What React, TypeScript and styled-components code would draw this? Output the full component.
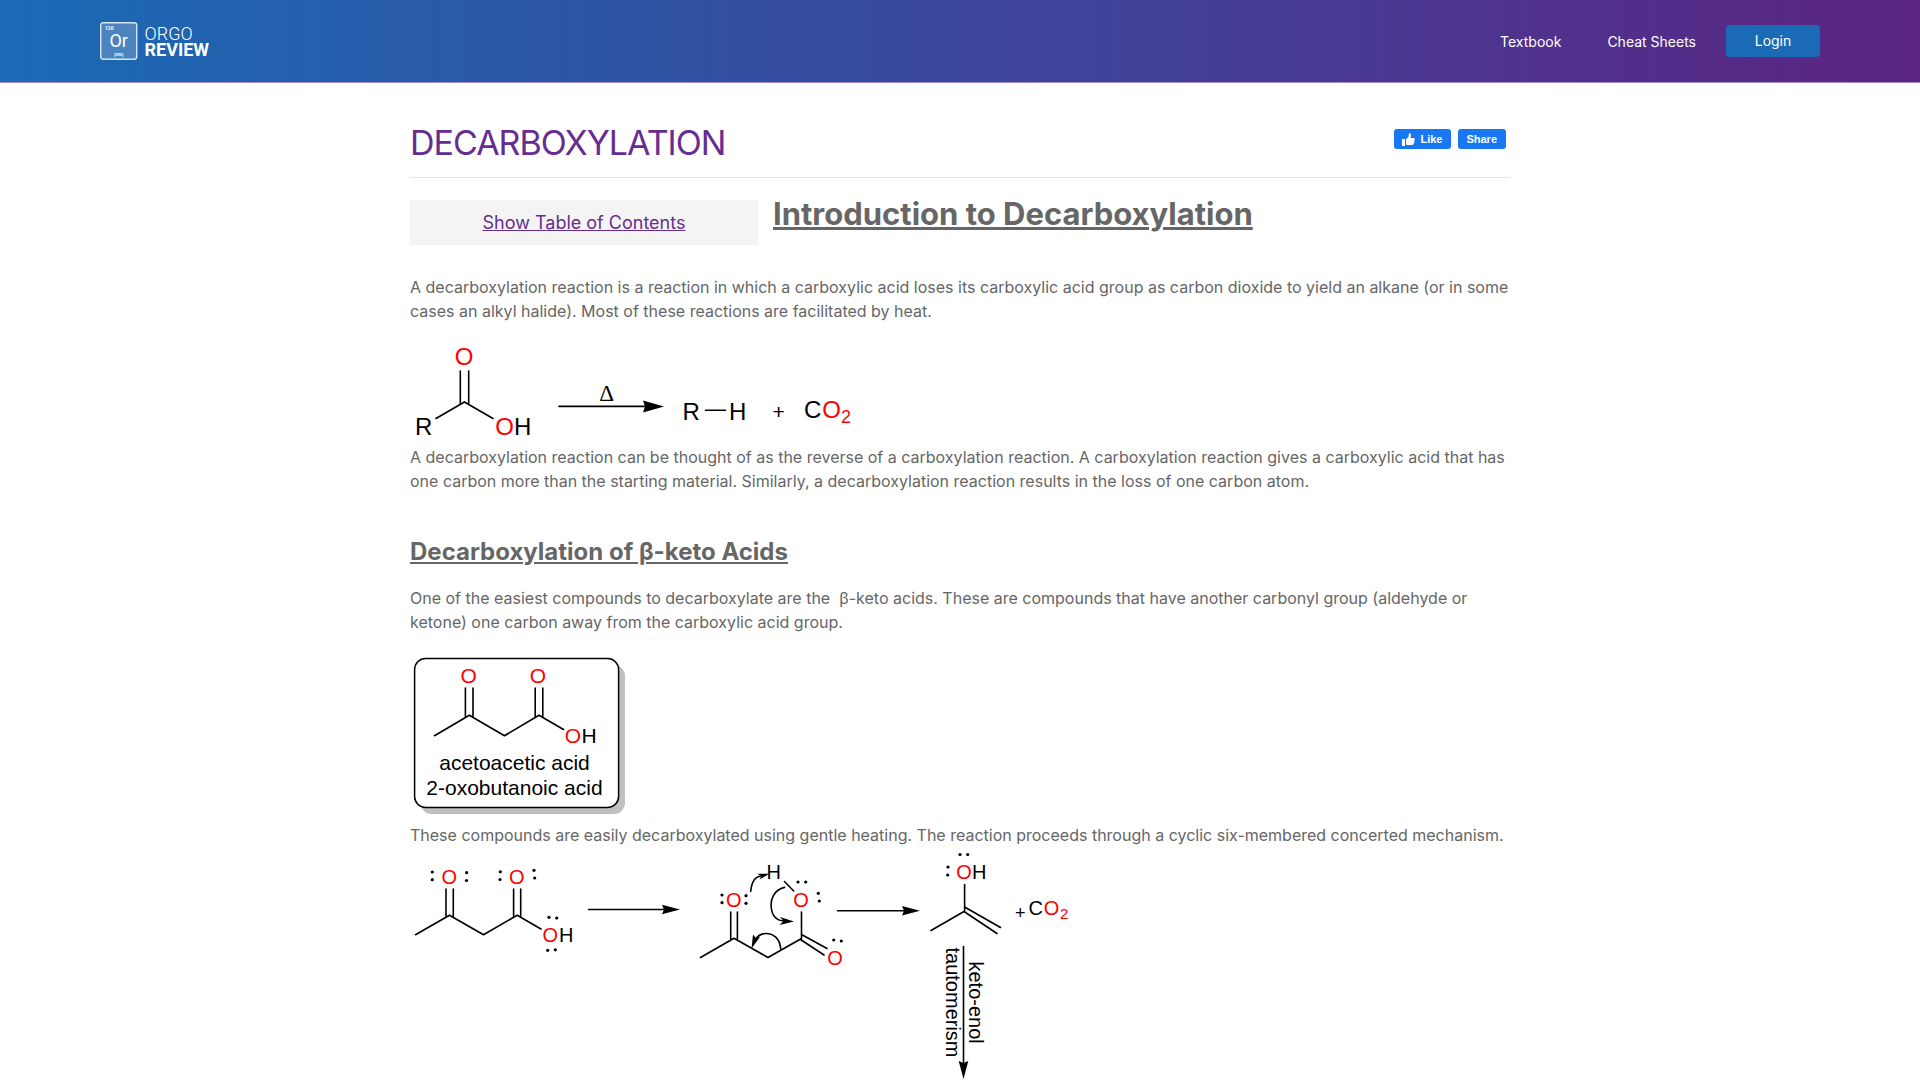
import React from "react";
import styled, { createGlobalStyle } from "styled-components";

const GlobalStyle = createGlobalStyle`
  * { box-sizing: border-box; }
  body {
    margin: 0;
    background: #fff;
    color: #666;
    font: 400 16px/24px Inter, "Liberation Sans", sans-serif;
  }
`;

const Header = styled.header`
  display: flex;
  align-items: center;
  justify-content: space-between;
  height: 83px;
  padding: 0 100px;
  border-bottom: 1px solid #a78bc4;
  background: linear-gradient(to right, #1a6ab5, #5c2483) padding-box;
`;

const LogoLink = styled.a`
  display: flex;
`;

const Nav = styled.nav`
  display: flex;
  align-items: center;
  font-size: 14px;
`;

const NavLink = styled.a`
  margin-right: 46px;
  padding-top: 2px;
  color: #fff;
  text-decoration: none;
  &:last-of-type { margin-right: 30px; }
`;

const LoginButton = styled.button`
  width: 94px;
  height: 32px;
  padding: 0;
  border: 0;
  border-radius: 4px;
  background: #1a6ab5;
  color: #fff;
  font: inherit;
`;

const Page = styled.main`
  max-width: 1100px;
  margin: 0 auto;
  padding-top: 38px;
`;

const TitleRow = styled.div`
  display: flex;
  justify-content: space-between;
  align-items: flex-start;
  padding: 0 4px 12px 0;
  border-bottom: 1px solid #e5e5e5;
`;

const Title = styled.h1`
  margin: 0;
  color: #662d91;
  font-size: 34px;
  font-weight: 400;
  line-height: 44px;
  letter-spacing: -1px;
  text-transform: uppercase;
`;

const Social = styled.div`
  display: flex;
  gap: 7px;
  padding-top: 8px;
`;

const SocialButton = styled.button`
  display: flex;
  align-items: center;
  gap: 5px;
  height: 20px;
  padding: 0 9px 0 8px;
  border: 0;
  border-radius: 3px;
  background: #1877f2;
  color: #fff;
  font: 700 11px/20px "Liberation Sans", Arial, sans-serif;
  letter-spacing: normal;
`;

const IntroRow = styled.div`
  display: flex;
  align-items: flex-start;
  gap: 15px;
  padding-top: 22px;
`;

const Toc = styled.div`
  display: flex;
  justify-content: center;
  width: 348px;
  padding: 11px 0 10px;
  background: #f4f4f4;
`;

const TocLink = styled.a`
  color: #662d91;
  font-size: 18px;
`;

const Heading = styled.h2`
  margin: 0;
  font-size: 31px;
  font-weight: 700;
  line-height: 28px;
  text-decoration: underline;
`;

const SubHeading = styled.h3`
  margin: 43px 0 18px;
  font-size: 24px;
  font-weight: 700;
  line-height: 32px;
  text-decoration: underline;
`;

const Text = styled.p<{ $lead?: boolean }>`
  margin: ${(p) => (p.$lead ? "30px" : "0")} 0 0;
`;

const Figure = styled.svg`
  display: block;
  overflow: visible;
  font-family: "Liberation Sans", Arial, sans-serif;
`;

const Bonds = styled.path`
  fill: none;
  stroke: #000;
  stroke-width: 1.6;
  stroke-linecap: round;
  stroke-linejoin: round;
`;

const RED = "#f00";

type LabelProps = { x: number; y: number; size?: number; children: string };

const O = ({ x, y, size = 20 }: { x: number; y: number; size?: number }) => (
  <text x={x} y={y} fontSize={size} fill={RED} textAnchor="middle">O</text>
);

const Label = ({ x, y, size = 20, children }: LabelProps) => (
  <text x={x} y={y} fontSize={size} fill="#000">{children}</text>
);

const Dots = ({ at }: { at: [number, number][] }) => (
  <g>{at.map(([x, y]) => <circle key={`${x},${y}`} cx={x} cy={y} r={1.6} />)}</g>
);

const Arrow = ({ x1, x2, y, head, half }: { x1: number; x2: number; y: number; head: number; half: number }) => (
  <g>
    <Bonds d={`M${x1} ${y}H${x2 - head + 4}`} />
    <path d={`M${x2} ${y}L${x2 - head} ${y - half}L${x2 - head + 2} ${y}L${x2 - head} ${y + half}Z`} />
  </g>
);

const Logo = () => (
  <svg width="112" height="38" viewBox="0 0 112 38" fill="#fff" fontFamily="Roboto, sans-serif">
    <rect x="0.7" y="0.7" width="36" height="36.6" rx="2.5" fill="#4d84c0" stroke="#d5e3f3" strokeWidth="1.4" />
    <text x="5" y="8" fontSize="5" fontWeight="700">120</text>
    <text x="18.7" y="25" fontSize="18" textAnchor="middle">Or</text>
    <text x="18.7" y="34" fontSize="4" fontWeight="700" textAnchor="middle">[295]</text>
    <text x="44.5" y="18" fontSize="18" fontWeight="300">ORGO</text>
    <text x="44.5" y="34" fontSize="18" fontWeight="700">REVIEW</text>
  </svg>
);

const ThumbIcon = () => (
  <svg width="13" height="13" viewBox="0 0 13 13" fill="#fff" aria-hidden="true">
    <path d="M0 6h3v7H0zM4 6.2C5.4 5.4 6.6 3.8 6.8 2.2V.8C7 0 8.9-.2 9 2.2c0 1-.3 1.900-.6 2.700h3.400c1.300.2 1.300 1.700.5 2.100.6.6.4 1.500-.2 1.800.4.7.1 1.400-.5 1.700.2 1-.4 1.500-1.200 1.500H6.200C5.300 12 4.800 11.500 4 11.400z" />
  </svg>
);

const ReactionFigure = () => (
  <Figure width="460" height="122" viewBox="410 323 460 122" role="img" aria-label="Decarboxylation reaction">
    <O x={464} y={365} size={24} />
    <Bonds d="M460.3 371V403.5M468.7 371V403.5M436 418.5L464.4 402L493 418.5" />
    <Label x={415} y={434.5} size={24}>R</Label>
    <O x={504.5} y={434.5} size={24} />
    <Label x={514} y={434.5} size={24}>H</Label>
    <Arrow x1={559} x2={664} y={406.4} head={21} half={6} />
    <text x="606.7" y="400.5" fontSize="23" fontFamily="'Liberation Serif', serif" textAnchor="middle">Δ</text>
    <Label x={682.5} y={419.5} size={24}>R</Label>
    <Bonds d="M705.5 410.3H725.5" />
    <Label x={729} y={419.5} size={24}>H</Label>
    <Label x={772.5} y={418.5} size={21}>+</Label>
    <Label x={804} y={418} size={24}>C</Label>
    <O x={831.5} y={418} size={24} />
    <text x="841" y="422.5" fontSize="18" fill={RED}>2</text>
  </Figure>
);

const AcidFigure = () => (
  <Figure width="220" height="189" viewBox="410 634 220 189" role="img" aria-label="Acetoacetic acid">
    <rect x="420.5" y="665" width="204.5" height="149" rx="11" fill="#c0c0c0" />
    <rect x="414.6" y="658.6" width="204" height="148.8" rx="11" fill="#fff" stroke="#000" strokeWidth="1.5" />
    <O x={468.7} y={683} size={21} />
    <O x={538} y={683} size={21} />
    <Bonds d="M465.4 688V716.5M473 688V716.5M535.2 688V716.5M542.8 688V716.5M434.5 735.7L469.3 715.3L504.5 735.7L539 715.3L563.5 729.5" />
    <O x={573} y={743} size={21} />
    <Label x={581.5} y={743} size={21}>H</Label>
    <text x="514.5" y="770" fontSize="21" textAnchor="middle">acetoacetic acid</text>
    <text x="514.5" y="795" fontSize="21" textAnchor="middle">2-oxobutanoic acid</text>
  </Figure>
);

const MechanismFigure = () => (
  <Figure width="670" height="233" viewBox="410 847 670 233" role="img" aria-label="Cyclic decarboxylation mechanism">
    <O x={449.3} y={883.5} />
    <O x={516.7} y={883.5} />
    <Bonds d="M446 889V917M453.3 889V917M513.6 889V917M520.7 889V917M415.5 934.7L449.5 915.2L483.5 934.7L517.2 915.2L541 929" />
    <O x={550.3} y={942} />
    <Label x={559} y={942}>H</Label>
    <Dots at={[[432.3, 872], [432.3, 879.7], [466.7, 872.7], [466.5, 880.5], [500.3, 871.8], [500, 879.5], [534, 870.3], [534.7, 878], [549, 917.3], [556.7, 918], [547.7, 950.3], [555.3, 949.8]]} />
    <Arrow x1={588.5} x2={680} y={909.5} head={18} half={4.8} />

    <O x={733.7} y={907} />
    <O x={801} y={907} />
    <Label x={766.5} y={879}>H</Label>
    <O x={835} y={965.3} />
    <Bonds d="M730.7 912V938.5M737.4 912V938.5M700.5 957.5L734 938.2L768 957.5L801.5 938.5V912M784.5 881.5L793.7 891M801.5 934.5L827 948.5M800.5 939.5L824 955" />
    <Bonds d="M750.7 891.5Q752 877 761 876M784.5 887.4C774 890 770.5 899 771.2 907C772 917 777 920.5 784 921M780.7 948.7C780 938 773 933.5 766 933.5C761 933.5 757.5 936 755 940" />
    <path d="M769.5 873.8L757 873.8L761.5 876L759.5 879.5ZM794 921.6L780 917L783.5 921L779.5 925ZM751.5 948.5L753 934.5L755.8 938L760 937Z" />
    <Dots at={[[722, 895], [722, 902.7], [746, 895.7], [746, 903.3], [798, 882], [805.7, 882], [818.3, 893.3], [819.3, 901], [833.7, 940], [841.3, 941]]} />
    <Arrow x1={837.5} x2={920} y={910.7} head={18} half={4.8} />

    <O x={964} y={879} />
    <Label x={972} y={879}>H</Label>
    <Dots at={[[960, 854.5], [967.7, 854.5], [948, 867], [947.7, 875]]} />
    <Bonds d="M964.6 884.5V907L1000.5 927.5M931 930.5L964 911.5L997 933.5M964.6 907V911" />
    <Label x={1015} y={919} size={18}>+</Label>
    <Label x={1028.5} y={915}>C</Label>
    <O x={1051.5} y={915} />
    <text x="1060" y="919" fontSize="15" fill={RED}>2</text>
    <g transform="translate(963.5 946) rotate(90)">
      <Arrow x1={0.5} x2={133} y={0} head={18} half={4.8} />
      <text x="1.5" y="17.7" fontSize="20">tautomerism</text>
      <text x="15.5" y="-5.8" fontSize="20">keto-enol</text>
    </g>
  </Figure>
);

export default function App() {
  return (
    <>
      <GlobalStyle />
      <Header>
        <LogoLink href="#" aria-label="Orgo Review"><Logo /></LogoLink>
        <Nav>
          <NavLink href="#textbook">Textbook</NavLink>
          <NavLink href="#cheat-sheets">Cheat Sheets</NavLink>
          <LoginButton type="button">Login</LoginButton>
        </Nav>
      </Header>
      <Page>
        <TitleRow>
          <Title>Decarboxylation</Title>
          <Social>
            <SocialButton type="button"><ThumbIcon />Like</SocialButton>
            <SocialButton type="button">Share</SocialButton>
          </Social>
        </TitleRow>
        <IntroRow>
          <Toc><TocLink href="#contents">Show Table of Contents</TocLink></Toc>
          <Heading>Introduction to Decarboxylation</Heading>
        </IntroRow>
        <Text $lead>
          A decarboxylation reaction is a reaction in which a carboxylic acid loses its carboxylic acid group as carbon dioxide to yield an alkane (or in some cases an alkyl halide). Most of these reactions are facilitated by heat.
        </Text>
        <ReactionFigure />
        <Text>
          A decarboxylation reaction can be thought of as the reverse of a carboxylation reaction. A carboxylation reaction gives a carboxylic acid that has one carbon more than the starting material. Similarly, a decarboxylation reaction results in the loss of one carbon atom.
        </Text>
        <SubHeading>Decarboxylation of β-keto Acids</SubHeading>
        <Text>
          One of the easiest compounds to decarboxylate are the &nbsp;β-keto acids. These are compounds that have another carbonyl group (aldehyde or ketone) one carbon away from the carboxylic acid group.
        </Text>
        <AcidFigure />
        <Text>
          These compounds are easily decarboxylated using gentle heating. The reaction proceeds through a cyclic six-membered concerted mechanism.
        </Text>
        <MechanismFigure />
      </Page>
    </>
  );
}
